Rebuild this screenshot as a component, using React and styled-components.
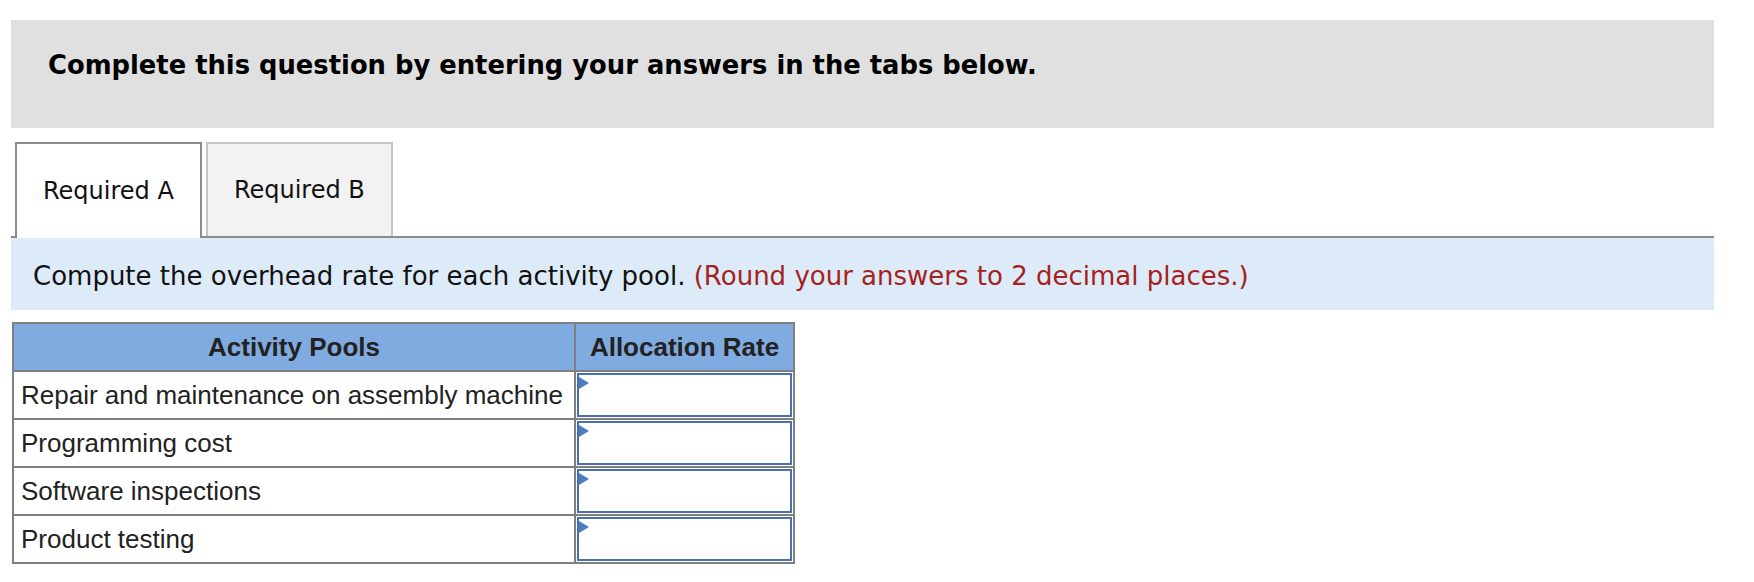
import styled, { createGlobalStyle } from "styled-components";

const pools = [
    "Repair and maintenance on assembly machine",
    "Programming cost",
    "Software inspections",
    "Product testing",
];

export default function App() {
    return (
        <>
            <GlobalStyle />
            <Page>
                <Banner>
                    <BannerText>Complete this question by entering your answers in the tabs below.</BannerText>
                </Banner>

                <TabStrip>
                    <Tab $active>Required A</Tab>
                    <Tab>Required B</Tab>
                </TabStrip>

                <Instruction>
                    Compute the overhead rate for each activity pool. <Hint>(Round your answers to 2 decimal places.)</Hint>
                </Instruction>

                <Table>
                    <colgroup>
                        <col style={{ width: "562px" }} />
                        <col style={{ width: "219px" }} />
                    </colgroup>
                    <thead>
                        <tr>
                            <HeadCell>Activity Pools</HeadCell>
                            <HeadCell>Allocation Rate</HeadCell>
                        </tr>
                    </thead>
                    <tbody>
                        {pools.map((pool) => (
                            <Row key={pool}>
                                <LabelCell>{pool}</LabelCell>
                                <InputCell>
                                    <AnswerBox />
                                </InputCell>
                            </Row>
                        ))}
                    </tbody>
                </Table>
            </Page>
        </>
    );
}



// STYLING
const GlobalStyle = createGlobalStyle`
    body {
        margin: 0;
        background: #ffffff;
    }
`;

const Page = styled.div`
    padding: 20px 40px 0 11px;
    width: 1703px;
`;

const Banner = styled.div`
    display: flex;
    align-items: flex-start;
    height: 108px;
    padding: 30px 0 0 37px;
    box-sizing: border-box;
    background-color: #e0e0e0;
`;

const BannerText = styled.h3`
    margin: 0;
    font-family: "DejaVu Sans", Verdana, sans-serif;
    font-weight: bold;
    font-size: 25.8px;
    line-height: 30px;
    color: #000;
`;

const TabStrip = styled.div`
    display: flex;
    gap: 4px;
    margin-top: 14px;
    padding-left: 4px;
    border-bottom: 2px solid #8c8c8c;
`;

const Tab = styled.div`
    display: flex;
    align-items: center;
    padding: 0 26px;
    box-sizing: border-box;
    margin-bottom: ${(p) => (p.$active ? "-2px" : "0")};
    height: ${(p) => (p.$active ? "96px" : "94px")};
    border: 2px solid ${(p) => (p.$active ? "#8c8c8c" : "#c6c6c6")};
    border-bottom: none;
    background-color: ${(p) => (p.$active ? "#ffffff" : "#f2f2f2")};
    font-family: "DejaVu Sans", Verdana, sans-serif;
    font-size: 24px;
    color: #111;
`;

const Instruction = styled.p`
    margin: 0;
    height: 72px;
    box-sizing: border-box;
    display: flex;
    align-items: center;
    padding: 4px 0 0 22px;
    background-color: #ddebf8;
    font-family: "DejaVu Sans", Verdana, sans-serif;
    font-size: 26px;
    line-height: 30px;
    color: #111;
    white-space: pre;
`;

const Hint = styled.span`
    color: #a4221e;
`;

const Table = styled.table`
    margin: 12px 0 0 1px;
    border-collapse: collapse;
    table-layout: fixed;
    border: 2px solid #7f7f7f;
    font-family: "Liberation Sans", Arial, sans-serif;
    font-size: 26px;
    color: #222;
`;

const HeadCell = styled.th`
    height: 46px;
    padding: 0;
    border: 2px solid #7f7f7f;
    background-color: #80abe0;
    font-weight: bold;
    text-align: center;
`;

const Row = styled.tr`
    height: 48px;
`;

const LabelCell = styled.td`
    padding: 0 7px;
    border: 2px solid #7f7f7f;
    white-space: nowrap;
`;

const InputCell = styled.td`
    padding: 1px;
    border: 2px solid #7f7f7f;
`;

const AnswerBox = styled.div`
    height: 40px;
    position: relative;
    border: 2px solid #4870b2;
    background: #fff;

    &::before {
        content: "";
        position: absolute;
        top: 2px;
        left: 0;
        border-top: 6px solid transparent;
        border-bottom: 6px solid transparent;
        border-left: 10px solid #4a7cc4;
    }
`;
